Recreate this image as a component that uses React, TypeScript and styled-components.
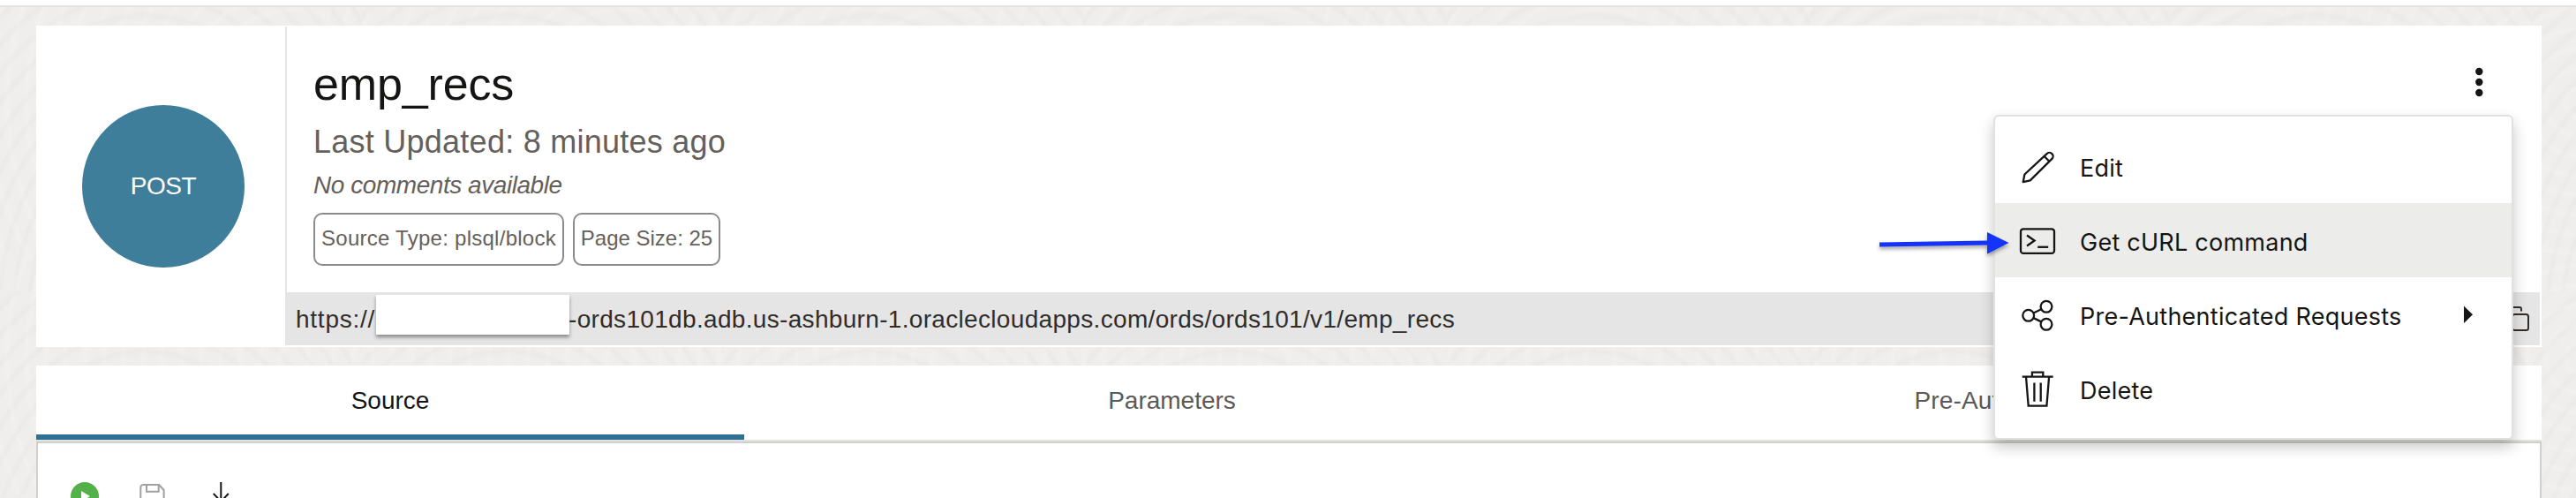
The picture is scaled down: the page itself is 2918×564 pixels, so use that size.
import React from "react";
import styled, { createGlobalStyle, css } from "styled-components";

const sans = '"Liberation Sans", Arial, sans-serif';

const GlobalStyle = createGlobalStyle`
  * { box-sizing: border-box; }
  body { margin: 0; font-family: ${sans}; color: #161513; }
`;

const Page = styled.main`
  position: relative;
  width: 2918px;
  height: 564px;
  overflow: hidden;
  display: flex;
  flex-direction: column;
  padding: 0 39px 0 41px;
  background-color: #efeeec;
  background-image:
    repeating-radial-gradient(ellipse at 40% 110%, transparent 0 9px, rgba(120, 116, 108, 0.03) 13px, transparent 17px),
    repeating-radial-gradient(circle at 90% 40%, transparent 0 12px, rgba(255, 255, 255, 0.16) 17px, transparent 22px);
  background-size: 410px 330px, 370px 290px;
`;

const TopBar = styled.div`
  flex: none;
  height: 8px;
  margin: 0 -39px 21px -41px;
  background: #fff;
  border-bottom: 2px solid #e2e3e2;
`;

const Card = styled.section`
  flex: none;
  display: flex;
  height: 364px;
  margin-bottom: 21px;
  padding: 0 2px 2px 0;
  background: #fff;
`;

const MethodPane = styled.div`
  width: 284px;
  padding-right: 2px;
  margin-top: 1px;
  display: flex;
  justify-content: center;
  align-items: center;
  border-right: 2px solid #e5e5e5;
`;

const Method = styled.div`
  width: 184px;
  height: 184px;
  margin-left: 8px;
  border-radius: 50%;
  background: #3f7e9a;
  color: #fff;
  display: flex;
  justify-content: center;
  align-items: center;
  font-size: 28px;
  letter-spacing: -0.4px;
`;

const Details = styled.div`
  flex: 1;
  display: flex;
  flex-direction: column;
`;

const Summary = styled.div`
  flex: 1;
  display: flex;
  justify-content: space-between;
  padding: 36px 60px 0 30px;
`;

const Title = styled.h1`
  margin: 0;
  font-size: 52px;
  line-height: 60px;
  font-weight: 400;
  letter-spacing: -0.15px;
`;

const Updated = styled.div`
  margin-top: 14px;
  font-size: 36px;
  line-height: 44px;
  letter-spacing: 0.25px;
  color: #65605b;
`;

const Comments = styled.div`
  margin-top: 9px;
  font-size: 28px;
  line-height: 36px;
  font-style: italic;
  letter-spacing: -0.45px;
  color: #65605b;
`;

const Chips = styled.div`
  display: flex;
  gap: 10px;
  margin-top: 13px;
`;

const Chip = styled.span<{ $width: number; $spacing?: number }>`
  width: ${(p) => p.$width}px;
  height: 60px;
  padding-bottom: 2px;
  display: flex;
  align-items: center;
  justify-content: center;
  border: 2px solid #8b8b8b;
  border-radius: 10px;
  font-size: 24px;
  letter-spacing: ${(p) => p.$spacing ?? 0}px;
  color: #65605b;
  white-space: nowrap;
`;

const MenuButton = styled.button`
  width: 24px;
  height: 40px;
  margin-top: 8px;
  padding: 0;
  border: 0;
  background: none;
`;

const UrlBar = styled.div`
  height: 60px;
  padding: 0 11px 0 10px;
  display: flex;
  align-items: center;
  background: #e5e5e5;
  font-size: 28px;
  color: #312d2a;
`;

const Scheme = styled.span`
  width: 91px;
  padding-top: 2px;
  letter-spacing: 0.75px;
`;

const Redacted = styled.span`
  width: 219px;
  height: 45px;
  margin-bottom: 9px;
  background: #fff;
  box-shadow: 0 3px 4px rgba(0, 0, 0, 0.4);
`;

const UrlRest = styled.span`
  margin-left: -1px;
  padding-top: 2px;
  letter-spacing: 0.325px;
`;

const CopyButton = styled.button`
  margin-left: auto;
  padding: 0;
  border: 0;
  background: none;
  width: 28px;
  height: 30px;
`;

const Tabs = styled.nav`
  flex: none;
  display: flex;
  height: 86px;
  background: #fff;
  border-bottom: 2px solid #e3e2df;
`;

const Tab = styled.div<{ $width: number; $active?: boolean; $spacing?: number }>`
  width: ${(p) => p.$width}px;
  height: 84px;
  display: flex;
  justify-content: center;
  padding-top: 22px;
  line-height: 36px;
  font-size: 28px;
  letter-spacing: ${(p) => p.$spacing ?? 0}px;
  color: #5b5a59;
  ${(p) =>
    p.$active &&
    css`
      color: #161513;
      border-bottom: 6px solid #2f6f94;
    `}
`;

const Panel = styled.section`
  flex: none;
  height: 120px;
  display: flex;
  gap: 46px;
  padding: 44px 37px;
  background: #fff;
  border: 2px solid #cfcfcd;
`;

const Menu = styled.div`
  position: absolute;
  left: 2258px;
  top: 130px;
  width: 589px;
  height: 368px;
  padding: 12px 0;
  background: #fff;
  border: 2px solid #e1e1e0;
  border-radius: 6px;
  box-shadow: 0 8px 16px rgba(22, 21, 19, 0.24);
  display: flex;
  flex-direction: column;
  justify-content: center;
`;

const MenuItem = styled.div<{ $active?: boolean }>`
  flex: none;
  height: 84px;
  display: flex;
  align-items: center;
  padding: 0 42px 0 24px;
  background: ${(p) => (p.$active ? "#ececea" : "transparent")};
  font-family: Inter, ${sans};
  font-size: 27px;
`;

const MenuLabel = styled.span`
  flex: 1;
  margin-left: 24px;
  padding-top: 4px;
  letter-spacing: 0.25px;
`;

const Callout = styled.svg`
  position: absolute;
  left: 2120px;
  top: 255px;
  overflow: visible;
  filter: drop-shadow(0 3px 2px rgba(0, 0, 0, 0.35));
`;

const stroke = { fill: "none", stroke: "#161513", strokeWidth: 2.3 };

const PencilIcon = () => (
  <svg width="48" height="48" viewBox="0 0 48 48" {...stroke} strokeLinejoin="round">
    <path d="M7.7 42.1l1.7-8.6L34.6 10.1a4.1 4.1 0 0 1 5.8 5.8L15.7 40.4z" />
    <path d="M31.6 13l5.8 5.8" />
  </svg>
);

const TerminalIcon = () => (
  <svg width="48" height="48" viewBox="0 0 48 48" {...stroke}>
    <rect x="5" y="11.3" width="38" height="27.6" rx="3" />
    <path d="M12 18.5l8.6 6-8.6 6" />
    <path d="M24.2 31.8h12" />
  </svg>
);

const ShareIcon = () => (
  <svg width="48" height="48" viewBox="0 0 48 48" {...stroke}>
    <circle cx="13.7" cy="25.3" r="6.4" />
    <circle cx="34" cy="15.3" r="6.4" />
    <circle cx="34" cy="35.3" r="6.4" />
    <path d="M19.5 22.5l8.7-4.3M19.5 28.1l8.7 4.3" />
  </svg>
);

const TrashIcon = () => (
  <svg width="48" height="48" viewBox="0 0 48 48" {...stroke}>
    <path d="M6.7 10.7h35M17.9 10.7V5.6h12.4v5.1" />
    <path d="M11 10.7l2.7 33h20.7l2.7-33" />
    <path d="M20.4 17.4v21.4M27.7 17.4v21.4" />
  </svg>
);

export default function App() {
  return (
    <Page>
      <GlobalStyle />
      <TopBar />
      <Card>
        <MethodPane>
          <Method>POST</Method>
        </MethodPane>
        <Details>
          <Summary>
            <div>
              <Title>emp_recs</Title>
              <Updated>Last Updated: 8 minutes ago</Updated>
              <Comments>No comments available</Comments>
              <Chips>
                <Chip $width={284} $spacing={0.26}>Source Type: plsql/block</Chip>
                <Chip $width={167}>Page Size: 25</Chip>
              </Chips>
            </div>
            <MenuButton aria-label="Actions">
              <svg width="24" height="40" viewBox="0 0 24 40" fill="#161513">
                <circle cx="15.3" cy="8" r="4.2" />
                <circle cx="15.3" cy="20" r="4.2" />
                <circle cx="15.3" cy="32" r="4.2" />
              </svg>
            </MenuButton>
          </Summary>
          <UrlBar>
            <Scheme>https://</Scheme>
            <Redacted />
            <UrlRest>-ords101db.adb.us-ashburn-1.oraclecloudapps.com/ords/ords101/v1/emp_recs</UrlRest>
            <CopyButton aria-label="Copy">
              <svg width="28" height="30" viewBox="0 0 28 30" fill="none" stroke="#312d2a" strokeWidth="2">
                <rect x="8" y="10" width="18" height="18" rx="2.5" />
                <path d="M5 22H3V4a2 2 0 0 1 2-2h11a2 2 0 0 1 2 2v2.5" />
              </svg>
            </CopyButton>
          </UrlBar>
        </Details>
      </Card>
      <Tabs>
        <Tab $width={802} $active>Source</Tab>
        <Tab $width={969}>Parameters</Tab>
        <Tab $width={1067} $spacing={0.15}>Pre-Authenticated Requests</Tab>
      </Tabs>
      <Panel>
        <svg width="32" height="32" viewBox="0 0 32 32">
          <circle cx="16" cy="16" r="16" fill="#52b148" />
          <path d="M12 10l10 6-10 6z" fill="#fff" />
        </svg>
        <svg width="30" height="32" viewBox="0 0 30 32" fill="none" stroke="#a0a0a0" strokeWidth="2">
          <path d="M4 3h18l5.6 6v17a3 3 0 0 1-3 3H4.3a3 3 0 0 1-3-3V6a3 3 0 0 1 3-3z" />
          <path d="M8 3v7.7h13.7V3" />
        </svg>
        <svg width="32" height="32" viewBox="0 0 32 32" fill="none" stroke="#161513" strokeWidth="2">
          <path d="M16.3 0v22M7.8 13l8.5 9 8.5-9" />
        </svg>
      </Panel>
      <Menu role="menu">
        <MenuItem>
          <PencilIcon />
          <MenuLabel>Edit</MenuLabel>
        </MenuItem>
        <MenuItem $active>
          <TerminalIcon />
          <MenuLabel>Get cURL command</MenuLabel>
        </MenuItem>
        <MenuItem>
          <ShareIcon />
          <MenuLabel>Pre-Authenticated Requests</MenuLabel>
          <svg width="20" height="24" viewBox="0 0 20 24" fill="#161513">
            <path d="M8 2.5l10 9.8L8 22z" />
          </svg>
        </MenuItem>
        <MenuItem>
          <TrashIcon />
          <MenuLabel>Delete</MenuLabel>
        </MenuItem>
      </Menu>
      <Callout width="156" height="40" viewBox="0 0 156 40" fill="#1433fb">
        <path d="M9 19.5l122-2v5l-122 2z" />
        <path d="M131 8l24.5 12-24.5 12.5z" />
      </Callout>
    </Page>
  );
}
